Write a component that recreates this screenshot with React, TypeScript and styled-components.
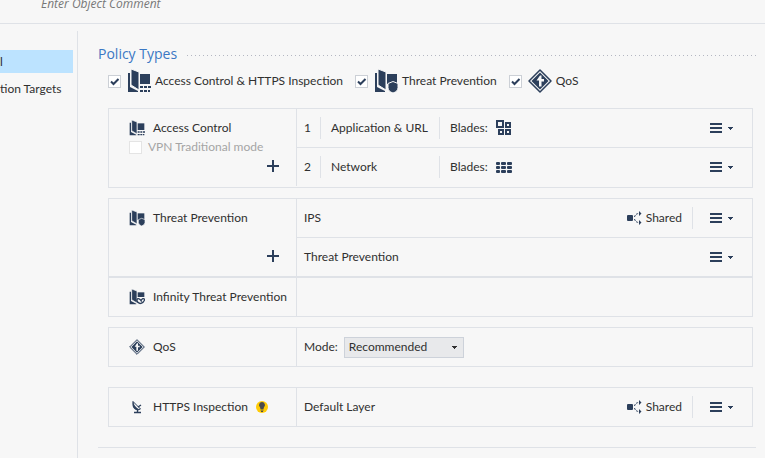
import React, { useState } from "react";
import styled, { createGlobalStyle } from "styled-components";

const ink = "#2c3f5b";
const line = "#dfe2e7";

const GlobalStyle = createGlobalStyle`
  *, *::before, *::after { box-sizing: border-box; }
  body {
    margin: 0;
    background: #f7f7f7;
    color: #303030;
    font: 12px/16px Lato, "Open Sans", sans-serif;
  }
  svg { display: block; flex: none; }
`;

const Page = styled.div`
  display: flex;
  flex-direction: column;
  overflow: hidden;
`;

const Header = styled.header`
  height: 24px;
  border-bottom: 1px solid ${line};
`;

const Comment = styled.input`
  display: block;
  width: 100%;
  height: 16px;
  margin-top: -4px;
  padding: 0 0 0 41px;
  border: 0;
  background: transparent;
  font: italic 12px/16px "Open Sans", "Noto Sans", sans-serif;
  &::placeholder { color: #777; opacity: 1; }
`;

const Body = styled.div`
  display: flex;
  padding-top: 7px;
`;

const Sidebar = styled.nav`
  flex: none;
  width: 78px;
  padding: 19px 4px 0 0;
  border-right: 1px solid ${line};
`;

const NavItem = styled.a<{ $active?: boolean }>`
  display: block;
  height: 23px;
  margin-bottom: 4px;
  line-height: 23px;
  white-space: nowrap;
  color: inherit;
  text-decoration: none;
  background: ${(p) => (p.$active ? "#bce3ff" : "transparent")};
`;

const Main = styled.main`
  flex: 1;
  min-width: 0;
  padding: 12px 9px 10px 20px;
`;

const TitleRow = styled.div`
  display: flex;
  align-items: center;
  gap: 10px;
`;

const Title = styled.h1`
  margin: 0;
  font: 400 14px/22px "Open Sans", sans-serif;
  color: #3b78c4;
`;

const Dots = styled.div`
  flex: 1;
  height: 1px;
  margin-top: 2px;
  background: repeating-linear-gradient(to right, #b4b7c2 0 1px, transparent 1px 4px);
`;

const Types = styled.div`
  display: flex;
  align-items: center;
  gap: 12px;
  height: 32px;
  padding-left: 10px;
`;

const CheckLabel = styled.label<{ $muted?: boolean }>`
  display: flex;
  align-items: center;
  gap: 4px;
  white-space: nowrap;
  color: ${(p) => (p.$muted ? "#a5a5a5" : "inherit")};
`;

const Box = styled.input`
  appearance: none;
  flex: none;
  width: 13px;
  height: 13px;
  margin: 0 2px 0 0;
  border: 1px solid #ccd0d6;
  background: #fff;
  &:checked {
    background: #fff
      url("data:image/svg+xml,%3Csvg xmlns='http://www.w3.org/2000/svg' viewBox='0 0 11 11'%3E%3Cpath d='M2 5.5 4.5 8 9.5 3' fill='none' stroke='%232c3f5b' stroke-width='2'/%3E%3C/svg%3E");
  }
  &:disabled { border-color: #e4e4e4; }
`;

const Panels = styled.div`
  display: flex;
  flex-direction: column;
  padding: 11px 3px 20px 10px;
`;

const Panel = styled.section<{ $gap?: number; $foot?: number }>`
  display: grid;
  grid-template-columns: 188px minmax(0, 1fr);
  margin-top: ${(p) => p.$gap ?? 0}px;
  padding-bottom: ${(p) => p.$foot ?? 0}px;
  border: 1px solid ${line};
`;

const Side = styled.div`
  display: flex;
  flex-direction: column;
  padding: 0 17px 0 20px;
  border-right: 1px solid ${line};
`;

const SideLabel = styled.div`
  display: flex;
  align-items: center;
  gap: 8px;
  height: 38px;
  white-space: nowrap;
`;

const Indented = styled.div`
  margin-top: -8px;
`;

const AddButton = styled.button`
  align-self: flex-end;
  margin: auto 0 14px;
  padding: 0;
  border: 0;
  background: none;
`;

const Layer = styled.div`
  display: flex;
  align-items: center;
  height: 38px;
  padding: 0 18px 0 7px;
  & + & {
    height: 39px;
    border-top: 1px solid ${line};
  }
`;

const Order = styled.span`
  width: 16px;
`;

const Rule = styled.span`
  flex: none;
  width: 1px;
  height: 22px;
  background: ${line};
`;

const Name = styled.span`
  width: 118px;
  padding-left: 10px;
  white-space: nowrap;
`;

const Blades = styled.span`
  display: flex;
  align-items: center;
  gap: 8px;
  padding-left: 10px;
`;

const Actions = styled.div`
  display: flex;
  align-items: center;
  gap: 17px;
  margin-left: auto;
`;

const Shared = styled.span`
  display: flex;
  align-items: center;
  gap: 4px;
  margin-right: -7px;
`;

const MenuButton = styled.button`
  display: block;
  padding: 0;
  border: 0;
  background: none;
`;

const Mode = styled.label`
  display: flex;
  align-items: center;
  gap: 6px;
`;

const Select = styled.select`
  appearance: none;
  width: 120px;
  height: 21px;
  padding: 0 16px 0 4px;
  border: 1px solid #cdd2da;
  border-radius: 0;
  color: inherit;
  font: inherit;
  background: #e8e9eb
    url("data:image/svg+xml,%3Csvg xmlns='http://www.w3.org/2000/svg' width='5' height='3'%3E%3Cpath d='M0 0h5v1H4v1H3v1H2V2H1V1H0z' fill='%23303030'/%3E%3C/svg%3E")
    no-repeat right 6px center;
`;

const Footer = styled.hr`
  margin: 0;
  border: 0;
  border-top: 1px solid ${line};
`;

type IconProps = { size?: number };

const Book = () => (
  <>
    <path d="M1 4h2v14l8 4v1H1z" />
    <path d="M4 0l8 3v18l-8-5z" stroke="#f7f7f7" strokeWidth="1" />
    <path d="M13 5h10v10H13z" />
  </>
);

const AccessIcon = ({ size = 16 }: IconProps) => (
  <svg width={size} height={size} viewBox="0 0 24 24" fill={ink} aria-hidden="true">
    <Book />
    <path d="M13 17h3v2h-3zM17 17h3v2h-3zM21 17h3v2h-3zM13 21h3v2h-3zM17 21h3v2h-3zM21 21h2v2h-2z" />
  </svg>
);

const ThreatIcon = ({ size = 16 }: IconProps) => (
  <svg width={size} height={size} viewBox="0 0 24 24" fill={ink} aria-hidden="true">
    <Book />
    <path d="M19 12.500l5 2v4q0 4-5 5.500-5-1.500-5-5.500v-4z" stroke="#f7f7f7" />
  </svg>
);

const InfinityIcon = () => (
  <svg width="16" height="16" viewBox="0 0 24 24" fill={ink} aria-hidden="true">
    <Book />
    <path d="M12 12h12v12H12z" fill="#f7f7f7" />
    <path d="M17 22q-6-2-5-6 1-3 5 0l2 3M17 22q7-3 6-7-2-2-5 2" fill="none" stroke={ink} strokeWidth="2" />
  </svg>
);

const QosIcon = ({ size = 16 }: IconProps) => (
  <svg width={size} height={size} viewBox="0 0 24 24" aria-hidden="true">
    <path d="M12 1l11 11-11 11L1 12z" fill="#f7f7f7" stroke={ink} strokeWidth="1.500" strokeLinejoin="round" />
    <path d="M12 3.500l8.500 8.500-8.500 8.500L3.500 12z" fill={ink} />
    <path d="M11 17.500v-6H8.500L12 6.500h1.500V10H16v2.500h-2.500v5z" fill="#f7f7f7" />
  </svg>
);

const DishIcon = () => (
  <svg width="16" height="16" viewBox="0 0 16 16" fill="none" stroke={ink} aria-hidden="true">
    <path d="M4 2.500q0 6 2.500 7.500 3 1.500 5 0z" fill="#f7f7f7" />
    <path d="M4 2q-1.500 5 1.500 8 2.500 1.500 5 .500Q5 8 4 2z" fill={ink} stroke="none" />
    <path d="M9 8l3-2M8.500 10v3M5 13.500h7" strokeWidth="1.400" />
  </svg>
);

const BulbIcon = () => (
  <svg width="12" height="12" viewBox="0 0 12 12" aria-label="Tip" role="img">
    <circle cx="6" cy="6" r="6" fill="#ffcb05" />
    <path d="M6 1a3 3 0 0 1 2 5.200L7.500 8h-3L4 6.200A3 3 0 0 1 6 1zM4.500 8.500h3v1h-3zM5 10h2v1H5z" fill="#4a4a4a" />
  </svg>
);

const PlusIcon = () => (
  <svg width="12" height="12" fill={ink} aria-hidden="true">
    <path d="M5 0h2v5h5v2H7v5H5V7H0V5h5z" />
  </svg>
);

const MenuIcon = () => (
  <svg width="24" height="10" fill={ink} aria-hidden="true">
    <path d="M0 0h12v2H0zM0 4h12v2H0zM0 8h12v2H0zM18 4h5v1h-1v1h-1v1h-1V6h-1V5h-1z" />
  </svg>
);

const ShareIcon = () => (
  <svg width="15" height="14" fill="none" aria-hidden="true">
    <rect y="4" width="6" height="6" rx="1" fill={ink} />
    <path d="M7.500 6q1-3.500 4.500-3.500M7.500 8q1 3.500 4.500 3.500" stroke={ink} strokeDasharray="2 1" />
    <path d="M12 0l2.500 2.500L12 5zM12 9l2.500 2.500L12 14z" fill={ink} />
  </svg>
);

const AppsIcon = () => (
  <svg width="16" height="16" fill="none" stroke={ink} strokeWidth="2" aria-hidden="true">
    <path d="M1 1h6v6H1zM10 3h4v4h-4zM3 10h4v4H3zM10 10h4v4h-4z" />
  </svg>
);

const WallIcon = () => (
  <svg width="16" height="11" fill={ink} aria-hidden="true">
    {[0, 4, 8].map((y) => (
      <g key={y}>
        <rect y={y} width="4" height="3" rx="1" />
        <rect x="5" y={y} width="5" height="3" rx="1" />
        <rect x="11" y={y} width="5" height="3" rx="1" />
      </g>
    ))}
  </svg>
);

function Check({ icon, label, on, disabled }: { icon?: React.ReactNode; label: string; on?: boolean; disabled?: boolean }) {
  const [checked, setChecked] = useState(!!on);
  return (
    <CheckLabel $muted={disabled}>
      <Box type="checkbox" checked={checked} disabled={disabled} onChange={(e) => setChecked(e.target.checked)} />
      {icon}
      {label}
    </CheckLabel>
  );
}

function LayerActions({ shared }: { shared?: boolean }) {
  return (
    <Actions>
      {shared && (
        <>
          <Shared>
            <ShareIcon />
            Shared
          </Shared>
          <Rule />
        </>
      )}
      <MenuButton type="button" aria-label="Layer menu">
        <MenuIcon />
      </MenuButton>
    </Actions>
  );
}

function BladeLayer({ order, name, icon }: { order: number; name: string; icon: React.ReactNode }) {
  return (
    <Layer>
      <Order>{order}</Order>
      <Rule />
      <Name>{name}</Name>
      <Rule />
      <Blades>
        Blades: {icon}
      </Blades>
      <LayerActions />
    </Layer>
  );
}

export default function App() {
  return (
    <Page>
      <GlobalStyle />
      <Header>
        <Comment placeholder="Enter Object Comment" aria-label="Object comment" />
      </Header>
      <Body>
        <Sidebar>
          <NavItem href="#general" $active>l</NavItem>
          <NavItem href="#targets">tion Targets</NavItem>
        </Sidebar>
        <Main>
          <TitleRow>
            <Title>Policy Types</Title>
            <Dots />
          </TitleRow>
          <Types>
            <Check on icon={<AccessIcon size={24} />} label="Access Control & HTTPS Inspection" />
            <Check on icon={<ThreatIcon size={24} />} label="Threat Prevention" />
            <Check on icon={<QosIcon size={24} />} label="QoS" />
          </Types>
          <Panels>
            <Panel $foot={1}>
              <Side>
                <SideLabel><AccessIcon />Access Control</SideLabel>
                <Indented><Check disabled label="VPN Traditional mode" /></Indented>
                <AddButton type="button" aria-label="Add access control layer"><PlusIcon /></AddButton>
              </Side>
              <div>
                <BladeLayer order={1} name="Application & URL" icon={<AppsIcon />} />
                <BladeLayer order={2} name="Network" icon={<WallIcon />} />
              </div>
            </Panel>
            <Panel $gap={10}>
              <Side>
                <SideLabel><ThreatIcon />Threat Prevention</SideLabel>
                <AddButton type="button" aria-label="Add threat prevention layer"><PlusIcon /></AddButton>
              </Side>
              <div>
                <Layer>IPS<LayerActions shared /></Layer>
                <Layer>Threat Prevention<LayerActions /></Layer>
              </div>
            </Panel>
            <Panel>
              <Side><SideLabel><InfinityIcon />Infinity Threat Prevention</SideLabel></Side>
              <Layer />
            </Panel>
            <Panel $gap={10}>
              <Side><SideLabel><QosIcon />QoS</SideLabel></Side>
              <Layer>
                <Mode>
                  Mode:
                  <Select defaultValue="Recommended">
                    <option>Recommended</option>
                  </Select>
                </Mode>
              </Layer>
            </Panel>
            <Panel $gap={20}>
              <Side><SideLabel><DishIcon />HTTPS Inspection<BulbIcon /></SideLabel></Side>
              <Layer>Default Layer<LayerActions shared /></Layer>
            </Panel>
          </Panels>
          <Footer />
        </Main>
      </Body>
    </Page>
  );
}
